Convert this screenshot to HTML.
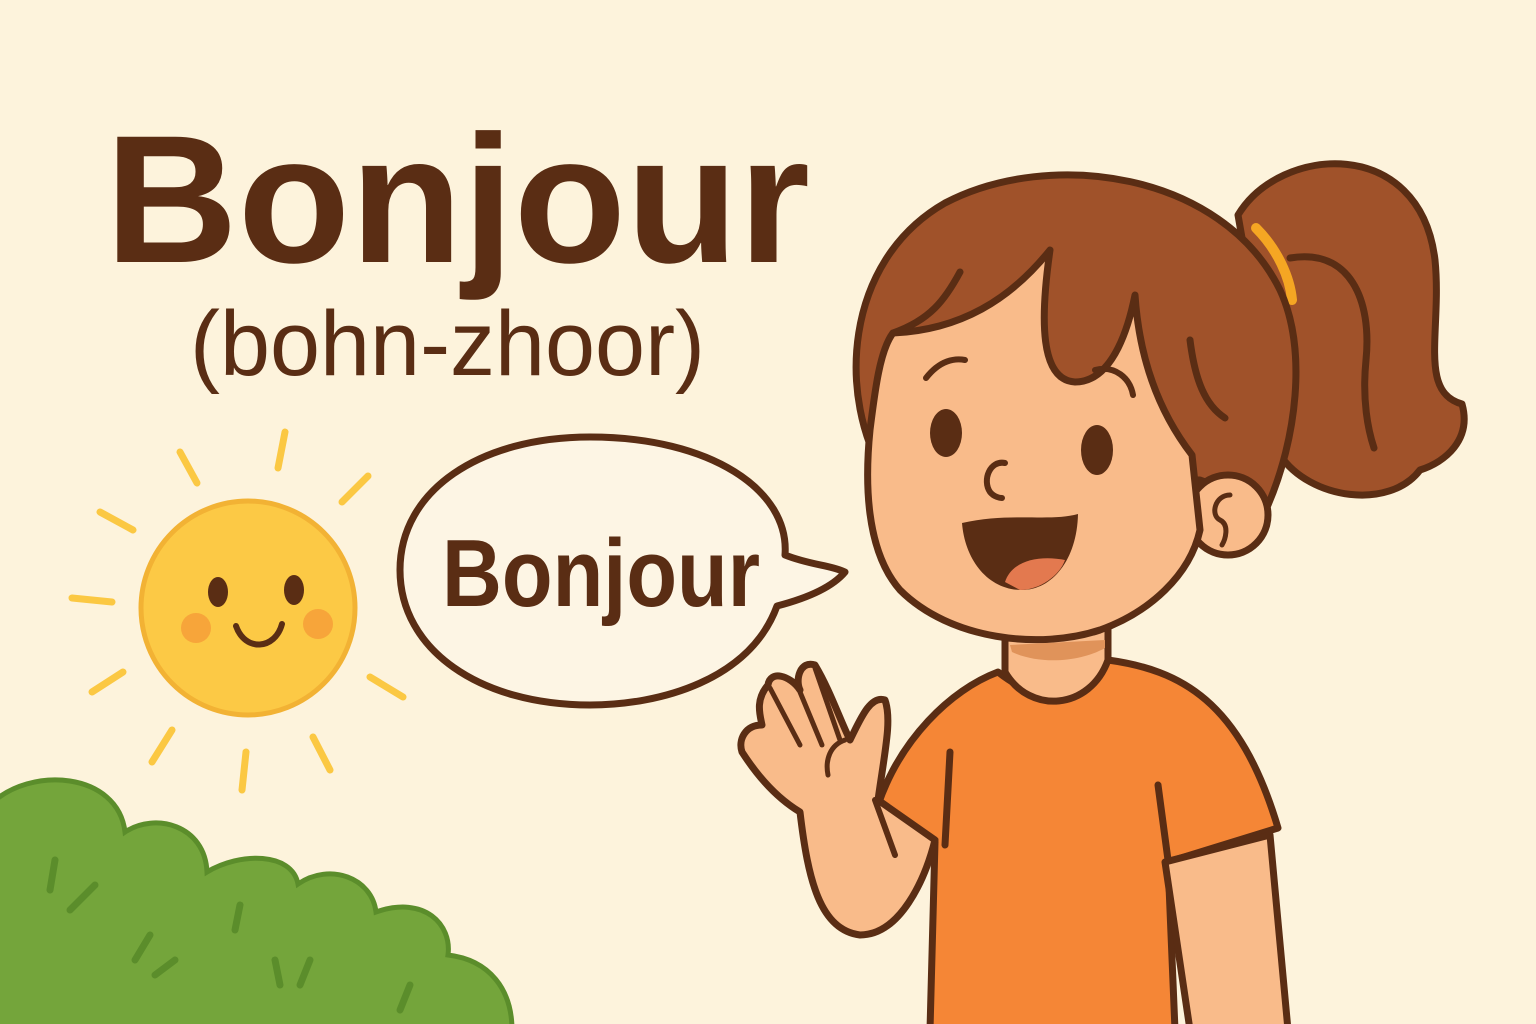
<!DOCTYPE html>
<html><head><style>
html,body{margin:0;padding:0;background:#fdf3dc;}
svg{display:block}
</style></head><body>
<svg width="1536" height="1024" viewBox="0 0 1536 1024" xmlns="http://www.w3.org/2000/svg">
<rect width="1536" height="1024" fill="#fdf3dc"/>
<text x="105" y="262" font-family="Liberation Sans, sans-serif" font-weight="bold" font-size="182" fill="#5a2d14" textLength="705" lengthAdjust="spacingAndGlyphs">Bonjour</text>
<text x="190" y="375" font-family="Liberation Sans, sans-serif" font-size="92" fill="#5a2d14" textLength="515" lengthAdjust="spacingAndGlyphs">(bohn-zhoor)</text>

<g stroke="#fbc843" stroke-width="7" stroke-linecap="round">
<line x1="180" y1="452" x2="197" y2="483"/><line x1="285" y1="432" x2="278" y2="468"/>
<line x1="368" y1="476" x2="342" y2="502"/><line x1="100" y1="512" x2="133" y2="530"/>
<line x1="72" y1="598" x2="112" y2="602"/><line x1="92" y1="692" x2="123" y2="672"/>
<line x1="152" y1="762" x2="172" y2="730"/><line x1="242" y1="790" x2="246" y2="752"/>
<line x1="330" y1="770" x2="313" y2="737"/><line x1="403" y1="697" x2="370" y2="677"/>
</g>
<circle cx="248" cy="608" r="107" fill="#fcc945" stroke="#f2b234" stroke-width="5"/>
<ellipse cx="218" cy="592" rx="10" ry="15" fill="#5a2d14"/>
<ellipse cx="294" cy="590" rx="10" ry="15" fill="#5a2d14"/>
<circle cx="196" cy="628" r="15" fill="#f7a53a"/><circle cx="318" cy="624" r="15" fill="#f7a53a"/>
<path d="M236,626 C245,652 275,650 282,624" fill="none" stroke="#5a2d14" stroke-width="6" stroke-linecap="round"/>

<path d="M590,437 C710,437 790,490 785,555 C810,565 830,565 845,572 C830,590 800,600 777,606 C750,680 660,705 590,705 C480,705 400,650 400,570 C400,490 480,437 590,437 Z" fill="#fdf5e4" stroke="#5a2d14" stroke-width="7" stroke-linejoin="round"/>
<text x="442" y="606" font-family="Liberation Sans, sans-serif" font-weight="bold" font-size="96" fill="#5a2d14" textLength="318" lengthAdjust="spacingAndGlyphs">Bonjour</text>

<path d="M-10,805 C30,765 118,772 125,832 C155,812 205,825 207,872 C240,852 292,852 298,884 C330,862 372,878 376,912 C425,895 452,925 448,955 C490,960 512,990 512,1030 L-10,1030 Z" fill="#74a53b" stroke="#5b8d2b" stroke-width="5"/>
<g stroke="#5b8d2b" stroke-width="7" stroke-linecap="round">
<line x1="55" y1="860" x2="50" y2="890"/><line x1="95" y1="885" x2="70" y2="910"/>
<line x1="150" y1="935" x2="135" y2="960"/><line x1="175" y1="960" x2="155" y2="975"/>
<line x1="240" y1="905" x2="235" y2="930"/><line x1="310" y1="960" x2="300" y2="985"/>
<line x1="275" y1="960" x2="280" y2="985"/><line x1="410" y1="985" x2="400" y2="1010"/>
</g>

<g stroke="#5a2d14" stroke-width="7" stroke-linejoin="round" stroke-linecap="round">
<path d="M1238,215 C1280,145 1420,135 1435,260 C1442,330 1418,392 1462,404 C1472,440 1445,462 1420,470 C1390,510 1310,500 1280,455 Z" fill="#a0522a"/>
<path d="M1290,258 C1350,248 1372,300 1366,360 C1362,400 1368,430 1374,448" fill="none"/>
<path d="M1256,228 C1278,250 1290,278 1292,300" fill="none" stroke="#f5a623" stroke-width="10"/>
<path d="M885,475 C838,400 842,262 945,203 C1050,148 1222,172 1280,290 C1308,350 1296,440 1268,505 L1200,480 Z" fill="#a0522a"/>
<circle cx="1228" cy="515" r="40" fill="#f9bb8a"/>
<path d="M1230,495 C1215,495 1210,515 1220,520 C1230,525 1225,540 1222,545" fill="none" stroke-width="5"/>
<path d="M878,805 C900,740 950,690 998,672 C1040,705 1080,705 1108,660 C1180,670 1240,700 1278,828 L1168,862 L1175,1030 L930,1030 L935,842 Z" fill="#f58636"/>
<path d="M1005,610 L1005,672 C1030,715 1090,710 1108,660 L1108,605 Z" fill="#f9bb8a"/>
<path d="M1165,862 L1190,1030 L1288,1030 L1270,835 Z" fill="#f9bb8a"/>
<path d="M800,812 C808,880 820,930 860,935 C900,935 925,880 935,840 L878,800 C885,750 892,720 885,700 C870,695 860,720 850,740 C840,720 830,690 815,665 C800,660 795,680 800,690 C790,675 770,670 768,685 C755,700 760,715 762,725 C745,725 738,740 742,752 C760,780 780,800 800,812 Z" fill="#f9bb8a"/>
<path d="M815,668 L840,740" fill="none" stroke-width="5"/>
<path d="M800,692 L822,745" fill="none" stroke-width="5"/>
<path d="M770,688 L800,745" fill="none" stroke-width="5"/>
<path d="M845,740 C830,745 825,760 828,775" fill="none" stroke-width="5"/>
<line x1="875" y1="800" x2="895" y2="855" stroke-width="6"/>
<line x1="950" y1="752" x2="945" y2="845"/>
<line x1="1158" y1="785" x2="1168" y2="860"/>
<path d="M893,333 C960,330 1010,300 1050,250 C1040,320 1040,380 1075,382 C1115,382 1130,320 1135,295 C1140,370 1165,420 1192,455 L1200,530 C1190,575 1150,612 1100,630 C1040,650 950,640 900,590 C865,550 865,480 870,430 C875,390 880,350 893,333 Z" fill="#f9bb8a"/>
<path d="M893,333 C930,320 945,300 960,272" fill="none"/>
<path d="M1190,340 C1195,380 1205,405 1225,418" fill="none"/>
<path d="M926,378 C940,360 955,358 965,360" fill="none" stroke-width="6"/>
<path d="M1095,370 C1115,365 1130,378 1133,395" fill="none" stroke-width="6"/>
<path d="M1005,463 C990,460 982,480 990,492 C994,497 1000,498 1002,498" fill="none" stroke-width="6"/>
</g>
<ellipse cx="946" cy="433" rx="16" ry="24" fill="#5a2d14"/>
<ellipse cx="1097" cy="450" rx="16" ry="25" fill="#5a2d14"/>
<path d="M962,523 C1010,512 1050,522 1078,514 C1077,560 1052,590 1022,590 C988,590 965,560 962,523 Z" fill="#5a2d14"/>
<path d="M1005,582 C1012,560 1040,555 1065,560 C1060,575 1040,590 1020,590 Z" fill="#e3794f"/>
<path d="M1012,652 C1040,665 1080,662 1105,648 L1105,640 L1010,645 Z" fill="#e0935a"/>
</svg>
</body></html>
